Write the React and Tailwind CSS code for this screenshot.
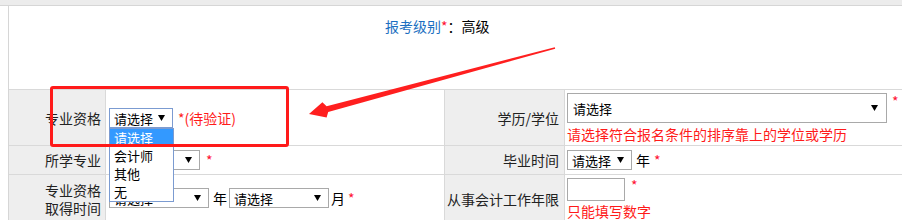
import React from "react";

const Tri = () => (
  <svg width="7" height="6" viewBox="0 0 7 6" className="shrink-0">
    <polygon points="0,0 7,0 3.5,6" fill="#000" />
  </svg>
);

function Sel({ w, h = 20, text = "请选择", border = "border-[#a9a9a9]", textCls = "" }) {
  return (
    <div
      className={`flex items-center justify-between border ${border} bg-white pl-[4px] pr-[7px] text-[13px] leading-none text-black shrink-0 ${textCls}`}
      style={{ width: w, height: h }}
    >
      <span>{text}</span>
      <Tri />
    </div>
  );
}

const Star = ({ cls = "" }) => <span className={`text-[#ff1133] text-[14px] ${cls}`}>*</span>;

export default function App() {
  return (
    <div
      className="relative w-[902px] h-[220px] overflow-hidden bg-white text-[14px] text-[#222]"
      style={{ fontFamily: '"Noto Sans CJK SC", "Noto Sans", sans-serif' }}
    >
      <div className="h-[6px] bg-[#ececec] border-b border-[#d6d6d6]" />
      <div className="ml-[8px] border-l border-[#d6d6d6]">
        <div className="h-[84px] border-b border-[#d9d9d9] pl-[376px] pt-[10px] leading-[20px]">
          <span className="text-[#1c6fc1]">报考级别</span>
          <span className="text-[#ff1133]">*</span>
          <span className="text-black">：高级</span>
        </div>
        <div className="grid grid-cols-[97px_339px_120px_1fr] grid-rows-[56px_29px_50px] leading-[18px]">
          {/* row 1 */}
          <div className="bg-[#eeeeee] border-r border-b border-[#d9d9d9] flex items-center justify-end pr-[4px] pt-[1px]">
            专业资格
          </div>
          <div className="border-r border-b border-[#d9d9d9] flex items-center pl-[3px] pt-[1px] gap-[5px]">
            <Sel w={64} border="border-[#7b9bd1]" />
            <span className="text-[#ff1a1a]">*(待验证)</span>
          </div>
          <div className="bg-[#eeeeee] border-r border-b border-[#d9d9d9] flex items-center justify-end pr-[5px] pt-[1px]">
            学历/学位
          </div>
          <div className="border-b border-[#d9d9d9] pl-[2px] pt-[3px] flex flex-col">
            <div className="flex items-start gap-[5px]">
              <Sel w={320} h={30} textCls="pl-[5px] pr-[8px]" />
              <Star cls="leading-[16px]" />
            </div>
            <div className="text-[#ff1a1a] leading-[20px] mt-[1px]">请选择符合报名条件的排序靠上的学位或学历</div>
          </div>
          {/* row 2 */}
          <div className="bg-[#eeeeee] border-r border-b border-[#d9d9d9] flex items-center justify-end pr-[4px]">
            所学专业
          </div>
          <div className="border-r border-b border-[#d9d9d9] flex items-center pl-[3px] gap-[6px]">
            <Sel w={91} text="" />
            <Star />
          </div>
          <div className="bg-[#eeeeee] border-r border-b border-[#d9d9d9] flex items-center justify-end pr-[5px]">
            毕业时间
          </div>
          <div className="border-b border-[#d9d9d9] flex items-center pl-[2px]">
            <Sel w={65} />
            <span className="ml-[4px] text-black">年</span>
            <Star cls="ml-[4px]" />
          </div>
          {/* row 3 */}
          <div className="bg-[#eeeeee] border-r border-[#d9d9d9] flex flex-col justify-center items-end pr-[4px] pb-[3px]">
            <span>专业资格</span>
            <span>取得时间</span>
          </div>
          <div className="border-r border-[#d9d9d9] flex items-center pl-[3px] pb-[4px]">
            <Sel w={100} />
            <span className="ml-[4px] text-black">年</span>
            <div className="ml-[2px]">
              <Sel w={100} />
            </div>
            <span className="ml-[2px] text-black">月</span>
            <Star cls="ml-[3px]" />
          </div>
          <div className="bg-[#eeeeee] border-r border-[#d9d9d9] flex items-center justify-end pr-[5px] pb-[3px]">
            从事会计工作年限
          </div>
          <div className="pl-[2px] pt-[3px] flex flex-col">
            <div className="flex items-start gap-[6px]">
              <div className="w-[58px] h-[23px] border border-[#a9a9a9] bg-white" />
              <Star cls="leading-[14px]" />
            </div>
            <div className="text-[#ff1a1a] leading-[18px] mt-[1px]">只能填写数字</div>
          </div>
        </div>
      </div>

      {/* dropdown list overlay */}
      <div className="absolute left-[109px] top-[128px] w-[65px] border border-[#7b9bd1] bg-white text-[13px] leading-[18px] text-black">
        <div className="bg-[#3399ff] text-white pl-[4px] h-[18px]">请选择</div>
        <div className="pl-[4px] h-[18px]">会计师</div>
        <div className="pl-[4px] h-[18px]">其他</div>
        <div className="pl-[4px] h-[18px]">无</div>
      </div>

      {/* annotation */}
      <div className="absolute left-[50px] top-[86px] w-[239px] h-[61px] border-[3px] border-[#ff1a1a] rounded-[3px]" />
      <svg className="absolute left-0 top-0" width="902" height="220" viewBox="0 0 902 220">
        <polygon
          points="309,114 322.4,102.2 326.6,106.2 554.8,47.3 555.2,48.7 328.2,112 326.6,117.6"
          fill="#ff1f1f"
        />
      </svg>
    </div>
  );
}
